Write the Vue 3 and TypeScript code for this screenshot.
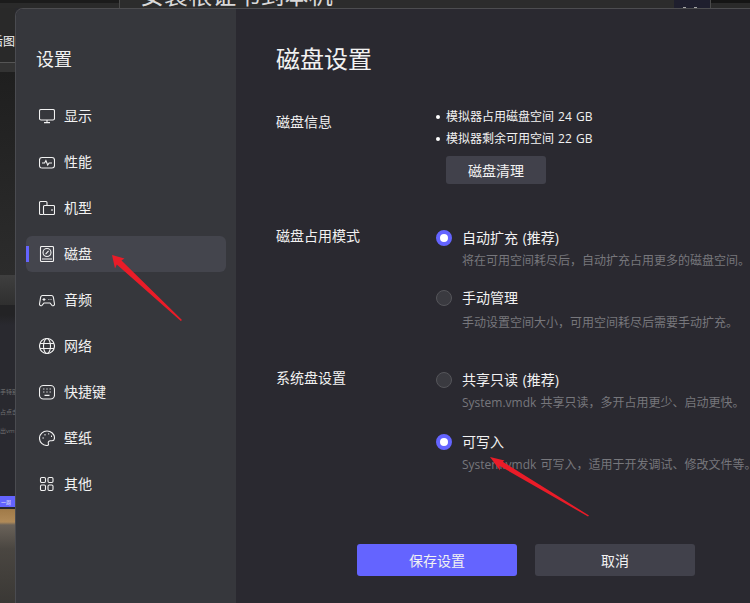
<template>
  <div class="page">
    <div class="backdrop">
      <div class="topbar">
        <div class="top-left"></div>
        <div class="top-main"><span class="top-title">安装根证书到本机</span></div>
        <div class="top-navy"><i></i><i></i></div>
        <div class="top-right"></div>
      </div>
      <div class="strip">
        <div class="strip-head"><span>后图</span></div>
        <div class="strip-sub"></div>
        <div class="strip-dark"></div>
        <div class="strip-band"></div>
        <div class="strip-list">
          <span>手特别说</span>
          <span>占点击动</span>
          <span>出vm设</span>
        </div>
        <div class="strip-tag"><span>一周</span></div>
        <div class="strip-photo"></div>
      </div>
    </div>

    <div class="modal">
      <aside class="sidebar">
        <div class="side-title">设置</div>
        <nav class="nav">
          <div v-for="item in navItems" :key="item.id" class="nav-item" :class="{ active: item.id === 'disk' }">
            <svg class="nav-icon" viewBox="0 0 16 16" width="16" height="16" fill="none" stroke="currentColor" stroke-width="1.1">
              <template v-if="item.id === 'display'">
                <rect x="0.5" y="1.5" width="15" height="10.5" rx="1.5" />
                <path d="M8 12v3M5 14.6h6" />
              </template>
              <template v-else-if="item.id === 'perf'">
                <rect x="0.5" y="3.5" width="15" height="10.5" rx="2.5" />
                <path d="M3 9h2.6l1.3-2.4 1.8 4.4 1.4-2h2.9" />
              </template>
              <template v-else-if="item.id === 'model'">
                <path d="M4.5 14.5H1.5a1 1 0 0 1-1-1v-11a1 1 0 0 1 1-1H7a1 1 0 0 1 1 1v3" />
                <rect x="4.5" y="5.5" width="11" height="9" rx="1" />
                <path d="M13 9v2" />
              </template>
              <template v-else-if="item.id === 'disk'">
                <rect x="1.5" y="0.5" width="13" height="15" rx="1" />
                <circle cx="8" cy="6.5" r="4" />
                <path d="M6.6 8.2l3-3.4M3 13h10" />
              </template>
              <template v-else-if="item.id === 'audio'">
                <path d="M3.5 3.5h9c1 0 1.5.5 1.8 1.5l1.2 7c.1 1.5-1.5 2.3-2.5 1.3L11 11H5l-2 2.3c-1 1-2.6.2-2.5-1.3L1.7 5c.3-1 .8-1.5 1.8-1.5z" />
                <path d="M3.5 7.5h3M5 6v3M9.5 7.500h.8M11.600 7.500h.8" />
              </template>
              <template v-else-if="item.id === 'network'">
                <circle cx="8" cy="8" r="7.500" />
                <ellipse cx="8" cy="8" rx="3.500" ry="7.500" />
                <path d="M1 5.500h14M1 10.500h14" />
              </template>
              <template v-else-if="item.id === 'hotkey'">
                <rect x="0.500" y="1.500" width="15" height="13.500" rx="4" />
                <path d="M4.200 5h1.200M7.400 5h1.200M10.600 5h1.200M4.200 8h1.200M7.400 8h1.200M10.600 8h1.200M5.500 11.400h5" />
              </template>
              <template v-else-if="item.id === 'wallpaper'">
                <path d="M8 1C3.900 1 .5 4.200.5 8.200c0 4 3.300 7.300 7.500 7.300 1.300 0 1.800-.9 1.400-2-.5-1.500.4-2.700 1.900-2.700H13c1.600 0 2.500-1.200 2.500-2.800C15.500 4 12 1 8 1z" />
                <path d="M3.600 8h1M5.500 4.800h1M9.200 3.900h1M12 6.200h1" stroke-width="1.400" />
              </template>
              <template v-else>
                <rect x="1.500" y="1.500" width="5" height="5" rx="1.200" />
                <rect x="9" y="1.500" width="5" height="5" rx="1.200" />
                <rect x="1.500" y="9" width="5" height="5.500" rx="1.200" />
                <rect x="9" y="9" width="5" height="5.500" rx="1.200" />
              </template>
            </svg>
            <span>{{ item.label }}</span>
          </div>
        </nav>
      </aside>

      <main class="content">
        <h1 class="heading">磁盘设置</h1>

        <section class="row first">
          <div class="label info-label">磁盘信息</div>
          <div>
            <div v-for="line in diskInfo" :key="line" class="bullet">{{ line }}</div>
            <button class="btn clean">磁盘清理</button>
          </div>
        </section>

        <section v-for="group in groups" :key="group.label" class="row" :class="group.cls">
          <div class="label">{{ group.label }}</div>
          <div class="options">
            <div v-for="opt in group.options" :key="opt.title" class="option" :class="{ roomy: opt.roomy }">
              <span class="radio" :class="{ checked: opt.checked }"></span>
              <div>
                <div class="opt-title">{{ opt.title }}</div>
                <div class="opt-desc">{{ opt.desc }}</div>
              </div>
            </div>
          </div>
        </section>

        <div class="actions">
          <button class="btn primary">保存设置</button>
          <button class="btn">取消</button>
        </div>
      </main>
    </div>

    <svg class="arrows" width="750" height="603" viewBox="0 0 750 603">
      <polygon points="112,255 124.500,258.500 121.500,260.500 182,320 180.800,321 116.800,264.500 115,268.500" fill="#ea1c28" />
      <polygon points="490,457 504.500,460.500 502.800,461.800 589,515.500 588,516.500 499.800,466 500,470.500" fill="#ea1c28" />
    </svg>
  </div>
</template>

<script setup lang="ts">
const navItems = [
  { id: 'display', label: '显示' },
  { id: 'perf', label: '性能' },
  { id: 'model', label: '机型' },
  { id: 'disk', label: '磁盘' },
  { id: 'audio', label: '音频' },
  { id: 'network', label: '网络' },
  { id: 'hotkey', label: '快捷键' },
  { id: 'wallpaper', label: '壁纸' },
  { id: 'other', label: '其他' },
];

const diskInfo = ['模拟器占用磁盘空间 24 GB', '模拟器剩余可用空间 22 GB'];

const groups = [
  {
    label: '磁盘占用模式',
    cls: 'mode',
    options: [
      { title: '自动扩充 (推荐)', desc: '将在可用空间耗尽后，自动扩充占用更多的磁盘空间。', checked: true, roomy: false },
      { title: '手动管理', desc: '手动设置空间大小，可用空间耗尽后需要手动扩充。', checked: false, roomy: true },
    ],
  },
  {
    label: '系统盘设置',
    cls: 'system',
    options: [
      { title: '共享只读 (推荐)', desc: 'System.vmdk 共享只读，多开占用更少、启动更快。', checked: false, roomy: false },
      { title: '可写入', desc: 'System.vmdk 可写入，适用于开发调试、修改文件等。', checked: true, roomy: false },
    ],
  },
];
</script>

<style>
html,
body {
  margin: 0;
  background: #28282c;
}
</style>

<style scoped>
.page {
  position: relative;
  width: 750px;
  height: 603px;
  overflow: hidden;
  font-family: 'Open Sans', 'Noto Sans CJK SC', sans-serif;
  color: #f2f2f2;
}
.backdrop {
  display: flex;
  flex-direction: column;
  height: 100%;
}
.topbar {
  display: flex;
  height: 8px;
  overflow: hidden;
  flex-shrink: 0;
}
.top-left {
  width: 119px;
  background: linear-gradient(#1b1b1b 3px, #2a2a2a 3px);
}
.top-main {
  width: 555px;
  box-sizing: border-box;
  padding-left: 20px;
  border-left: 1px solid #4a4a4a;
  background: #2c2c2c;
}
.top-title {
  display: block;
  margin-top: -17px;
  font-size: 24px;
  line-height: 24px;
  color: #d8d8d8;
  letter-spacing: 0.1px;
}
.top-navy {
  display: flex;
  align-items: flex-end;
  gap: 8px;
  width: 36px;
  padding-left: 9px;
  box-sizing: border-box;
  background: #1f1f2e;
}
.top-navy i {
  width: 3px;
  height: 1px;
  background: #a8a8a8;
}
.top-right {
  flex: 1;
  border-left: 1px solid #4a4a4a;
  background: linear-gradient(#151515 3px, #2a2a2a 3px);
}
.strip {
  display: flex;
  flex-direction: column;
  width: 15px;
  flex: 1;
}
.strip-head {
  display: flex;
  justify-content: flex-end;
  height: 55px;
  box-sizing: border-box;
  padding-top: 26px;
  overflow: hidden;
  background: #292929;
  border-bottom: 1px solid #555;
  font-size: 12px;
  line-height: 16px;
  white-space: nowrap;
  flex-shrink: 0;
}
.strip-head span {
  flex-shrink: 0;
}
.strip-sub {
  height: 9px;
  background: #333;
}
.strip-dark {
  height: 203px;
  background: linear-gradient(#1f1f1f, #2c2c2c);
}
.strip-band {
  height: 30px;
  background: linear-gradient(#3f3f3f, #2f2f2f);
}
.strip-list {
  display: flex;
  flex-direction: column;
  gap: 13.5px;
  height: 191px;
  box-sizing: border-box;
  padding-top: 84px;
  overflow: hidden;
  background: linear-gradient(#232325 10px, #29292f 20px);
  font-size: 6px;
  line-height: 6px;
  color: #6f6f6f;
  white-space: nowrap;
}
.strip-tag {
  display: flex;
  align-items: center;
  height: 11px;
  background: #6464ff;
  font-size: 5px;
  padding-left: 1px;
  overflow: hidden;
}
.strip-photo {
  flex: 1;
  margin-top: 2px;
  background: linear-gradient(#a07a48, #b08a58 13px, #6a6259 16px, #4a4641 40px, #3a3835);
}
.modal {
  position: absolute;
  left: 15px;
  top: 8px;
  right: 0;
  bottom: 0;
  display: flex;
  box-sizing: border-box;
  border-top: 1px solid #4d4d50;
  border-left: 1px solid #4a4b50;
  border-top-left-radius: 8px;
  background: #2a2930;
  overflow: hidden;
}
.sidebar {
  width: 220px;
  flex-shrink: 0;
  background: #36373c;
}
.side-title {
  padding: 40px 0 0 20px;
  font-size: 18px;
  line-height: 20px;
}
.nav {
  display: flex;
  flex-direction: column;
  gap: 10px;
  margin: 29px 0 0 10px;
  width: 200px;
}
.nav-item {
  position: relative;
  display: flex;
  align-items: center;
  gap: 9px;
  height: 36px;
  padding-left: 13px;
  border-radius: 6px;
  font-size: 14px;
}
.nav-item span {
  margin-top: -2px;
}
.nav-item.active {
  background: #44454d;
}
.nav-item.active::before {
  content: '';
  position: absolute;
  left: 0;
  top: 10px;
  width: 3px;
  height: 16px;
  background: #6464ff;
}
.nav-icon {
  flex-shrink: 0;
}
.content {
  flex: 1;
  min-width: 0;
  padding: 33px 0 0 40px;
  white-space: nowrap;
  word-spacing: 1px;
}
.heading {
  margin: 0;
  font-size: 24px;
  font-weight: 400;
  line-height: 34px;
}
.row {
  display: grid;
  grid-template-columns: 160px 1fr;
}
.first {
  margin-top: 30px;
}
.label {
  font-size: 14px;
  line-height: 20px;
}
.info-label {
  padding-top: 6px;
}
.bullet {
  position: relative;
  padding-left: 10px;
  font-size: 12px;
  line-height: 22px;
}
.bullet::before {
  content: '';
  position: absolute;
  left: 0;
  top: 9px;
  width: 4px;
  height: 4px;
  border-radius: 50%;
  background: #fff;
}
.btn {
  width: 160px;
  height: 32px;
  border: 0;
  border-radius: 3px;
  background: #41414b;
  color: #f2f2f2;
  font-family: inherit;
  font-size: 14px;
  padding: 0;
}
.btn.clean {
  display: block;
  width: 100px;
  height: 28px;
  margin: 6px 0 0 10px;
}
.btn.primary {
  background: #6464ff;
}
.mode {
  margin-top: 42px;
}
.system {
  margin-top: 36px;
}
.options {
  display: flex;
  flex-direction: column;
  gap: 18px;
  padding-top: 2px;
}
.system .options {
  gap: 20px;
}
.option {
  display: flex;
  gap: 10px;
}
.radio {
  width: 16px;
  height: 16px;
  box-sizing: border-box;
  margin-top: 2px;
  border: 1px solid #55555a;
  border-radius: 50%;
  background: #3a3a40;
  flex-shrink: 0;
}
.radio.checked {
  border: 4px solid #6464ff;
  background: #fff;
}
.opt-title {
  font-size: 14px;
  line-height: 20px;
}
.opt-desc {
  margin-top: 4px;
  font-size: 12px;
  line-height: 18px;
  color: #77777c;
}
.roomy .opt-desc {
  margin-top: 6px;
}
.actions {
  display: flex;
  gap: 18px;
  margin: 70px 0 0 81px;
}
.arrows {
  position: absolute;
  inset: 0;
  pointer-events: none;
}
</style>
